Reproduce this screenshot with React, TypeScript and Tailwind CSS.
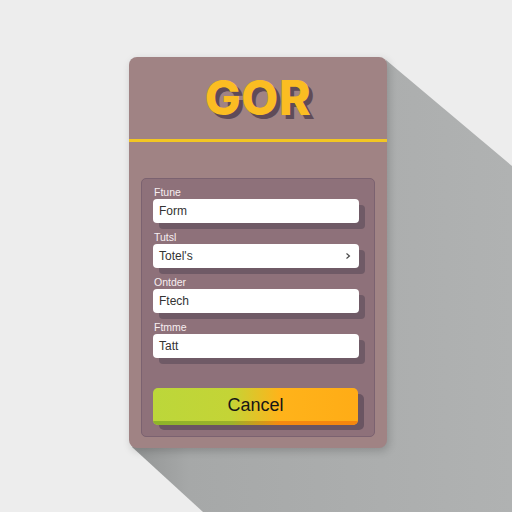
import React from "react";

const fields = [
  { label: "Ftune", value: "Form", chevron: false },
  { label: "Tutsl", value: "Totel's", chevron: true },
  { label: "Ontder", value: "Ftech", chevron: false },
  { label: "Ftmme", value: "Tatt", chevron: false },
];

// Flat long shadow cast by the card toward the bottom-right corner
const LongShadow = () => (
  <svg
    className="absolute inset-0 pointer-events-none"
    width="512"
    height="512"
    viewBox="0 0 512 512"
  >
    <defs>
      <linearGradient id="ls" x1="0" y1="0" x2="1" y2="0">
        <stop offset="0" stopColor="#939595" />
        <stop offset="0.15" stopColor="#a6a8a8" />
        <stop offset="1" stopColor="#b0b2b2" />
      </linearGradient>
    </defs>
    <polygon
      points="386,60 512,166 512,512 203,512 132,447"
      fill="url(#ls)"
    />
  </svg>
);

const Field = ({
  label,
  value,
  chevron,
}: {
  label: string;
  value: string;
  chevron: boolean;
}) => (
  <div className="flex flex-col">
    <span className="text-[10.5px] leading-[12px] text-[#f7eef0] pl-[1px]">
      {label}
    </span>
    <div className="relative mt-[1px]">
      <div className="absolute left-[6px] top-[6px] w-full h-full rounded-[4px] bg-[#6f5a66]" />
      <div className="relative h-[24px] rounded-[4px] bg-white flex items-center justify-between px-[6px] text-[12px] text-[#333]">
        <span>{value}</span>
        {chevron && (
          <svg width="8" height="8" viewBox="0 0 8 8" className="mr-[1px]">
            <path
              d="M2.5 1.5 L5.5 4 L2.5 6.5"
              fill="none"
              stroke="#444"
              strokeWidth="1.1"
            />
          </svg>
        )}
      </div>
    </div>
  </div>
);

export default function App() {
  return (
    <div
      className="relative w-[512px] h-[512px] overflow-hidden bg-[#ededed]"
      style={{ fontFamily: "'Liberation Sans', Arial, sans-serif" }}
    >
      <LongShadow />
      <div className="absolute left-[129px] top-[57px] w-[258px] h-[391px] rounded-[8px] bg-[#a08384] flex flex-col shadow-[2px_3px_8px_rgba(0,0,0,0.18)]">
        {/* Title */}
        <div className="h-[82px] flex items-center justify-center">
          <span
            className="text-[48px] leading-none font-extrabold text-[#fbbd22] tracking-[0.5px] [text-shadow:4px_4px_0_#5f4b58]"
            style={{ fontFamily: "Inter, 'DejaVu Sans', sans-serif" }}
          >
            GOR
          </span>
        </div>
        <div className="h-[3px] bg-[#f2c623]" />

        {/* Form panel */}
        <div className="mt-[36px] mx-[12px] h-[259px] rounded-[5px] bg-[#8e717a] border border-[#7b6270] px-[11px] pt-[7px] flex flex-col">
          <div className="flex flex-col gap-[8px] w-[206px]">
            {fields.map((f) => (
              <Field key={f.label} {...f} />
            ))}
          </div>

          <div className="relative mt-[30px] w-[205px]">
            <div className="absolute left-[6px] top-[6px] w-full h-[36px] rounded-[5px] bg-[#6a5562]" />
            <div className="relative h-[37px] rounded-[5px] overflow-hidden bg-[linear-gradient(90deg,#bcd73a_0%,#c4d436_38%,#ffb31a_62%,#ffac16_100%)] flex items-center justify-center">
              <div className="absolute left-0 right-0 bottom-0 h-[4px] bg-[linear-gradient(90deg,#8db42a_0%,#9cb22a_38%,#f58a10_62%,#f5860e_100%)]" />
              <span className="relative text-[18px] text-[#161616] -mt-[2px]">
                Cancel
              </span>
            </div>
          </div>
        </div>
      </div>
    </div>
  );
}
